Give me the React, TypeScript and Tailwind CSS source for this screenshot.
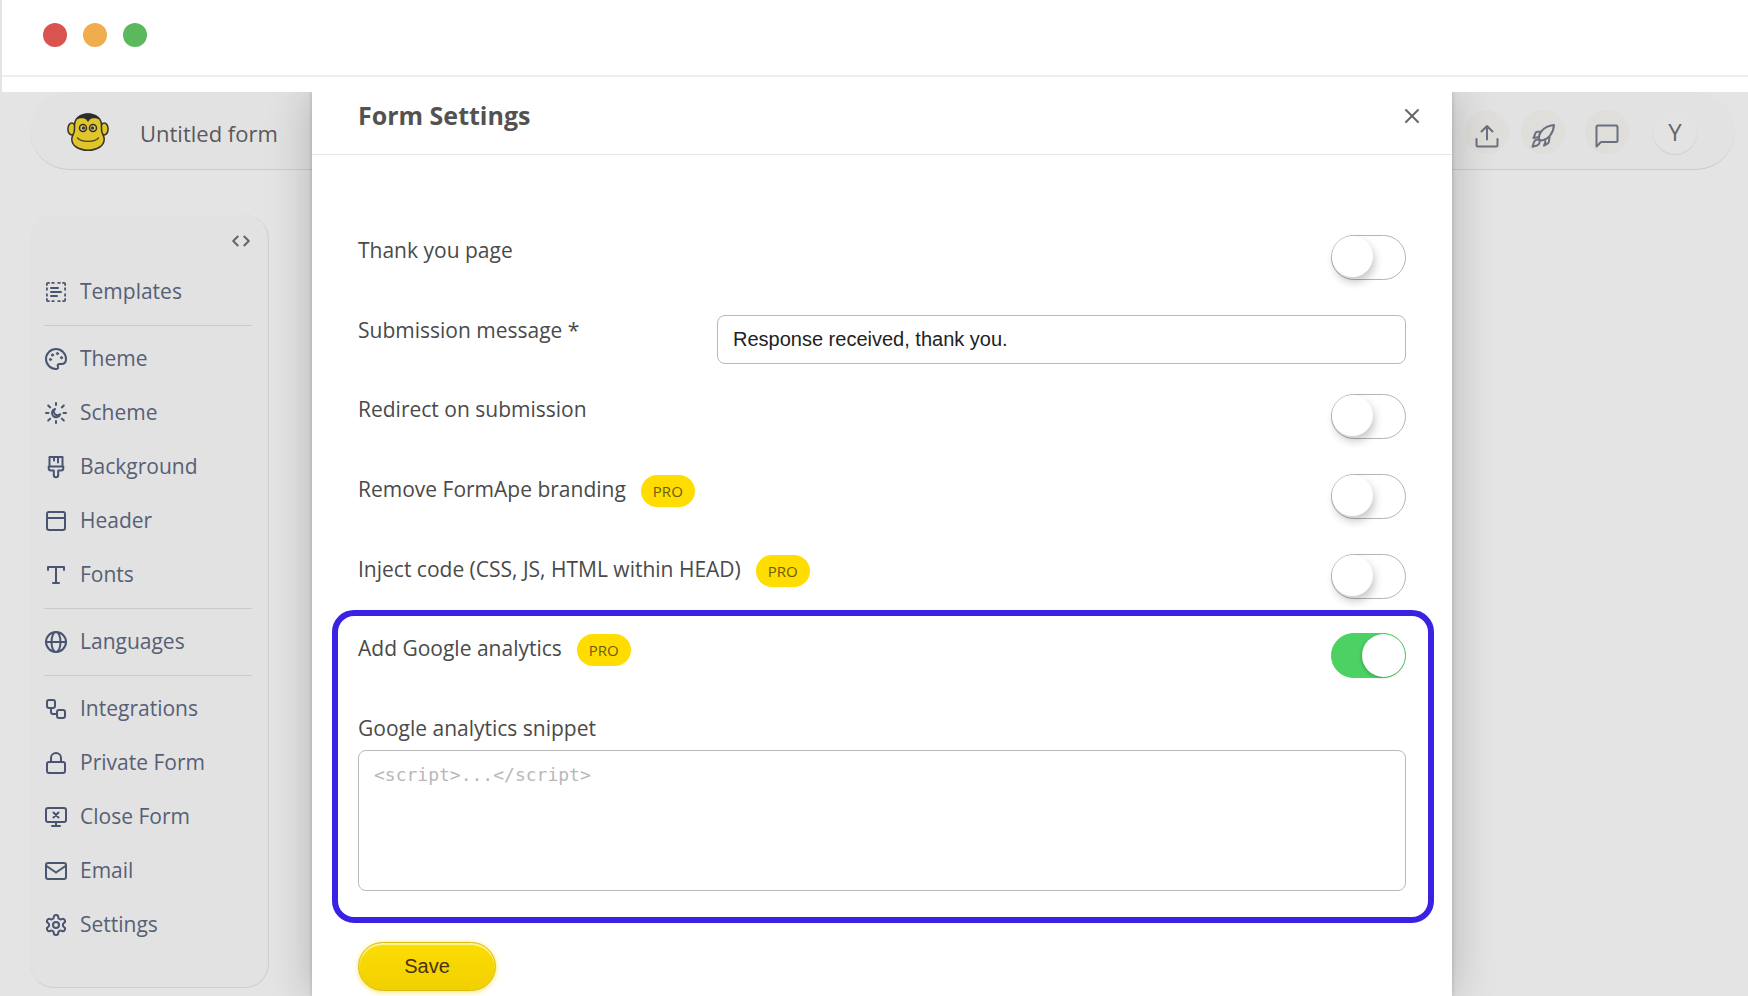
import { useState } from 'react'
import type { ReactNode } from 'react'
import { X } from 'lucide-react'

function Icon({ children, className = 'size-6' }: { children: ReactNode, className?: string }) {
  return (
    <svg
      viewBox="0 0 24 24"
      className={`${className} shrink-0`}
      fill="none"
      stroke="currentColor"
      strokeWidth={2}
      strokeLinecap="round"
      strokeLinejoin="round"
      aria-hidden="true"
    >
      {children}
    </svg>
  )
}

const groups = [
  [
    {
      label: 'Templates',
      icon: <>
        <path d="M2.9 5V4a1.1 1.1 0 0 1 1.1-1.1h1M8.2 2.9h1.6M14.2 2.9h1.6M19 2.9h1A1.1 1.1 0 0 1 21.1 4v1M21.1 8.2v1.6M21.1 14.2v1.6M21.1 19v1a1.1 1.1 0 0 1-1.1 1.1h-1M15.8 21.1h-1.6M9.8 21.1H8.2M5 21.1H4A1.1 1.1 0 0 1 2.9 20v-1M2.9 15.8v-1.6M2.9 9.8V8.2" strokeWidth="1.8" />
        <path d="M7 8h7M7 12h10M7 16h6" />
      </>,
    },
  ],
  [
    {
      label: 'Theme',
      icon: <>
        <path d="M12 22a10 10 0 1 1 10-10c0 3.2-2 5-4.600 5h-1.600c-2 0-2.600 1.400-1.900 2.700.8 1.400-.2 2.300-1.900 2.300Z" />
        <g fill="currentColor" strokeWidth="1">
          <circle cx="6.500" cy="12.500" r="1.100" />
          <circle cx="8.500" cy="8" r="1.100" />
          <circle cx="13.500" cy="6.600" r="1.100" />
          <circle cx="17.500" cy="10.700" r="1.100" />
        </g>
      </>,
    },
    {
      label: 'Scheme',
      icon: <>
        <path d="M12 2v2M12 20v2M2 12h2.500M19.500 12H22M4.200 4.500l2 1.900M17.800 6.400l2-1.900M4.200 19.500l2-1.900M17.800 17.600l2 1.900" />
        <path d="M11 8a4.200 4.200 0 1 0 5.200 5.200A3.600 3.600 0 0 1 11 8Z" />
      </>,
    },
    {
      label: 'Background',
      icon: <>
        <path d="M5.500 2h13v9.500h-13ZM5.500 11.500H4.700v1.700a2.300 2.300 0 0 0 2.300 2.300h2.800V20a2.200 2.200 0 0 0 4.400 0v-4.500H17a2.300 2.300 0 0 0 2.300-2.300v-1.700h-.8" />
        <path d="M10 2.500v3M14 2.500v5" />
      </>,
    },
    {
      label: 'Header',
      icon: <>
        <rect x="3" y="3" width="18" height="18" rx="2" />
        <path d="M3 9h18" />
      </>,
    },
    {
      label: 'Fonts',
      icon: <path d="M4 7V4h16v3M12 4v16M9 20h6" />,
    },
  ],
  [
    {
      label: 'Languages',
      icon: <>
        <circle cx="12" cy="12" r="10" />
        <path d="M2 12h20" />
        <ellipse cx="12" cy="12" rx="4.500" ry="10" />
      </>,
    },
  ],
  [
    {
      label: 'Integrations',
      icon: <>
        <rect x="3" y="3" width="8" height="8" rx="2" />
        <rect x="13" y="13" width="8" height="8" rx="2" />
        <path d="M7 11v4a2 2 0 0 0 2 2h4" />
      </>,
    },
    {
      label: 'Private Form',
      icon: <>
        <rect x="3" y="11" width="18" height="11" rx="2" />
        <path d="M7 11V7a5 5 0 0 1 10 0v4" />
      </>,
    },
    {
      label: 'Close Form',
      icon: <>
        <rect x="2" y="3" width="20" height="14" rx="2" />
        <path d="M12 17v4M8 21h8M9.500 7.500l5 5M14.500 7.500l-5 5" />
      </>,
    },
    {
      label: 'Email',
      icon: <>
        <rect x="2" y="4" width="20" height="16" rx="2" />
        <path d="m2.500 7 9.500 6.500L21.500 7" />
      </>,
    },
    {
      label: 'Settings',
      icon: <>
        <path d="M12.220 2h-.44a2 2 0 0 0-2 2v.18a2 2 0 0 1-1 1.730l-.43.25a2 2 0 0 1-2 0l-.15-.08a2 2 0 0 0-2.730.73l-.22.38a2 2 0 0 0 .73 2.730l.15.1a2 2 0 0 1 1 1.720v.51a2 2 0 0 1-1 1.740l-.15.09a2 2 0 0 0-.73 2.730l.22.38a2 2 0 0 0 2.730.73l.15-.08a2 2 0 0 1 2 0l.43.25a2 2 0 0 1 1 1.730V20a2 2 0 0 0 2 2h.44a2 2 0 0 0 2-2v-.18a2 2 0 0 1 1-1.730l.43-.25a2 2 0 0 1 2 0l.15.08a2 2 0 0 0 2.730-.73l.22-.39a2 2 0 0 0-.73-2.730l-.15-.08a2 2 0 0 1-1-1.740v-.5a2 2 0 0 1 1-1.740l.15-.09a2 2 0 0 0 .73-2.730l-.22-.38a2 2 0 0 0-2.730-.73l-.15.08a2 2 0 0 1-2 0l-.43-.25a2 2 0 0 1-1-1.730V4a2 2 0 0 0-2-2z" />
        <circle cx="12" cy="12" r="3" />
      </>,
    },
  ],
]

function Logo() {
  return (
    <svg viewBox="0 0 42 38" className="h-[38px] w-[42px]" role="img" aria-label="FormApe">
      <g fill="#e0c62a" stroke="#35342a" strokeWidth="1.500">
        <ellipse cx="4.800" cy="16" rx="3.900" ry="6" />
        <ellipse cx="37.200" cy="16" rx="3.900" ry="6" />
        <path d="M21 1C12.500 1 7.500 6 7.500 12.500c0 3 .3 5-.7 7.500-.8 1.800-2 3.500-2 6.200C4.800 33 12 37.200 21 37.200S37.200 33 37.200 26.200c0-2.700-1.200-4.400-2-6.200-1-2.500-.7-4.500-.7-7.500C34.500 6 29.500 1 21 1Z" />
      </g>
      <path d="M8.500 7C11 3 15.500.5 21 .5S31 3 33.500 7C29.500 4.500 25 4.700 22.800 6.500L21 9l-1.800-2.500C17 4.700 12.500 4.500 8.500 7Z" fill="#2b2d30" />
      <g fill="#cfc06a" stroke="#35342a" strokeWidth="1.500">
        <circle cx="16" cy="15" r="3.500" />
        <circle cx="26" cy="15" r="3.500" />
      </g>
      <circle cx="16.500" cy="15" r="1.500" fill="#2b2d30" />
      <circle cx="25.500" cy="15" r="1.500" fill="#2b2d30" />
      <path d="M10.500 25C15 29.500 27 29.500 31.500 25" fill="none" stroke="#4d4020" strokeWidth="1.400" strokeLinecap="round" />
    </svg>
  )
}

function TopBar() {
  return (
    <header className="mr-[13px] ml-[30px] flex h-[78px] items-center justify-between rounded-[39px] border-b border-[#cbcbcb] bg-[#e2e2e2] pt-[2px] pr-[38px] pl-[37px]">
      <div className="flex items-start gap-[31px]">
        <Logo />
        <h1 className="pt-1 text-[22px] text-[#5c585a]">Untitled form</h1>
      </div>
      <div className="flex items-center text-[#6b7080]">
        <button aria-label="Publish" className="mr-3 flex size-11 items-center justify-center rounded-full bg-[#dfdedb] pt-2">
          <Icon>
            <path d="M1.500 15v6a1.500 1.500 0 0 0 1.500 1.500h18a1.500 1.500 0 0 0 1.500-1.500v-6M12 15.500V2M6.500 7.500 12 2l5.500 5.500" />
          </Icon>
        </button>
        <button aria-label="Launch" className="mr-5 flex size-11 items-center justify-center rounded-full bg-[#dfdedb] pt-2">
          <Icon>
            <path d="M8 15.500c-.6-6 3.500-13 15-14.500-.5 8-5.500 14.500-12.500 15.500Z" />
            <path d="M8.500 10.500 9.500 7.700H6.200a1.600 1.600 0 0 0-1.500 1L2.500 14l5.500-1M13.500 15.500l1 2.500-1.500 3.700 3.500-2a3 3 0 0 0 1.400-2l.6-4.700" />
            <path d="M8 16c-2-1-4 0-5 2l-1.500 4.700L6 21.500c2.200-.8 3.500-3.500 2-5.500Z" />
          </Icon>
        </button>
        <button aria-label="Comments" className="mr-6 flex size-11 items-center justify-center rounded-full bg-[#dfdedb] pt-2">
          <Icon>
            <path d="M3 1.500h18A1.500 1.500 0 0 1 22.500 3v13.500A1.500 1.500 0 0 1 21 18H6l-4.500 4.500V3A1.500 1.500 0 0 1 3 1.500Z" />
          </Icon>
        </button>
        <button aria-label="Account" className="flex size-11 items-center justify-center rounded-full bg-[#e3e3e3] text-2xl text-[#666] shadow-[0_1px_1px_#cfcfcf]">
          Y
        </button>
      </div>
    </header>
  )
}

function Sidebar() {
  return (
    <aside className="mt-[45px] ml-[30px] w-[239px] rounded-3xl border-r border-b border-[#cfcfcf] bg-[#e2e2e2] pr-4 pb-[29px] pl-[14px]">
      <div className="flex h-[50px] items-center justify-end pt-[2px]">
        <button aria-label="Embed code" className="text-[#666]">
          <Icon className="size-[22px]">
            <path d="M9 6.500 3.500 12 9 17.500M15 6.500l5.500 5.500L15 17.500" strokeWidth="2.200" strokeLinecap="butt" />
          </Icon>
        </button>
      </div>
      <nav>
        {groups.map((items, index) => (
          <ul key={index} className={index > 0 ? 'border-t border-[#cacaca] pt-[6px]' : ''}>
            {items.map((item, i) => (
              <li key={item.label} className={i == items.length - 1 ? 'mb-[6px]' : ''}>
                <a href="#" className="flex h-[54px] items-center gap-3 text-[21px] text-[#566075]">
                  <span className="text-[#485470]"><Icon>{item.icon}</Icon></span>
                  {item.label}
                </a>
              </li>
            ))}
          </ul>
        ))}
      </nav>
    </aside>
  )
}

function Toggle({ id, label, pro, defaultChecked }: { id: string, label: string, pro?: boolean, defaultChecked?: boolean }) {
  const [on, setOn] = useState(!!defaultChecked)
  return (
    <div className="flex items-start justify-between">
      <div className="flex h-8 items-center gap-[15px]">
        <label htmlFor={id}>{label}</label>
        {pro && <span className="mt-[2px] flex h-8 items-center rounded-full bg-[#fd0] px-3 text-[15px] text-[#6b5b0c]">PRO</span>}
      </div>
      <input
        id={id}
        type="checkbox"
        role="switch"
        checked={on}
        onChange={(e) => setOn(e.target.checked)}
        className="flex h-[45px] w-[75px] cursor-pointer appearance-none rounded-full border border-[#b4b4b4] bg-white before:h-[41px] before:w-[41px] before:rounded-full before:bg-white before:shadow-[2px_5px_8px_rgba(0,0,0,0.22)] checked:border-[#4cd263] checked:bg-[#4cd263] checked:before:ml-[30px] checked:before:h-[43px] checked:before:w-[43px] checked:before:shadow-[-1px_1px_3px_rgba(0,0,0,0.2)]"
      />
    </div>
  )
}

function SettingsModal() {
  return (
    <section role="dialog" aria-label="Form Settings" className="w-full max-w-[1140px] bg-white text-[21px] text-[#4a4a4a] shadow-[0_0_42px_rgba(0,0,0,0.22),0_0_4px_rgba(0,0,0,0.2)]">
      <div className="flex h-[63px] items-center justify-between border-b border-[#e6e6e6] px-[46px] pb-[14px]">
        <h2 className="text-[25px] font-bold text-[#525252]">Form Settings</h2>
        <button aria-label="Close" className="-mr-[18px] text-[#666]">
          <X className="size-6" strokeWidth={2} />
        </button>
      </div>
      <form className="px-[46px] pt-20 pb-1" onSubmit={(e) => e.preventDefault()}>
        <div className="flex flex-col gap-[35px]">
          <Toggle id="thank-you" label="Thank you page" />
          <div className="-mb-[5px] flex items-start">
            <label htmlFor="message" className="flex h-8 w-[359px] shrink-0 items-center">Submission message *</label>
            <input
              id="message"
              defaultValue="Response received, thank you."
              className="h-[49px] min-w-0 flex-1 rounded-lg border border-[#b9b9b9] px-[15px] font-['Liberation_Sans',Arial,sans-serif] text-xl text-[#222]"
            />
          </div>
          <Toggle id="redirect" label="Redirect on submission" />
          <Toggle id="branding" label="Remove FormApe branding" pro />
          <Toggle id="inject" label="Inject code (CSS, JS, HTML within HEAD)" pro />
        </div>
        <div className="mt-[11px] -mr-7 -ml-[26px] rounded-[22px] border-6 border-[#3a22e4] pt-[17px] pr-[22px] pb-[26px] pl-5">
          <Toggle id="analytics" label="Add Google analytics" pro defaultChecked />
          <label htmlFor="snippet" className="mt-[35px] flex h-8 items-center">Google analytics snippet</label>
          <textarea
            id="snippet"
            placeholder="<script>...</script>"
            className="mt-[5px] block h-[141px] w-full resize-none rounded-lg border border-[#b9b9b9] px-[15px] py-3 font-['DejaVu_Sans_Mono',monospace] text-lg leading-6 placeholder:text-[#b8b8b8]"
          />
        </div>
        <button className="mt-[19px] h-[49px] w-[138px] rounded-full border border-[#d9bd10] bg-linear-to-b from-[#fbdd05] to-[#f2d000] pb-[2px] font-['Liberation_Sans',Arial,sans-serif] text-xl text-[#4a3210] shadow-[inset_0_2px_1px_#fff3a0,0_1px_5px_#fbe35a]">
          Save
        </button>
      </form>
    </section>
  )
}

export default function App() {
  return (
    <div className="flex min-h-screen flex-col bg-white font-['Segoe_UI','Open_Sans','Noto_Sans',sans-serif]">
      <div className="h-[92px] border-l-2 border-[#e4e4e4]">
        <div className="flex h-[77px] gap-4 border-b-2 border-[#efeeea] pt-[23px] pl-[41px]">
          <span className="size-6 rounded-full bg-[#d9534f]" />
          <span className="size-6 rounded-full bg-[#f0ad4e]" />
          <span className="size-6 rounded-full bg-[#5cb85c]" />
        </div>
      </div>
      <div className="grid flex-1 overflow-hidden bg-[#e4e4e4]">
        <div className="[grid-area:1/1]">
          <TopBar />
          <Sidebar />
        </div>
        <div className="flex justify-center pl-4 [grid-area:1/1]">
          <SettingsModal />
        </div>
      </div>
    </div>
  )
}
